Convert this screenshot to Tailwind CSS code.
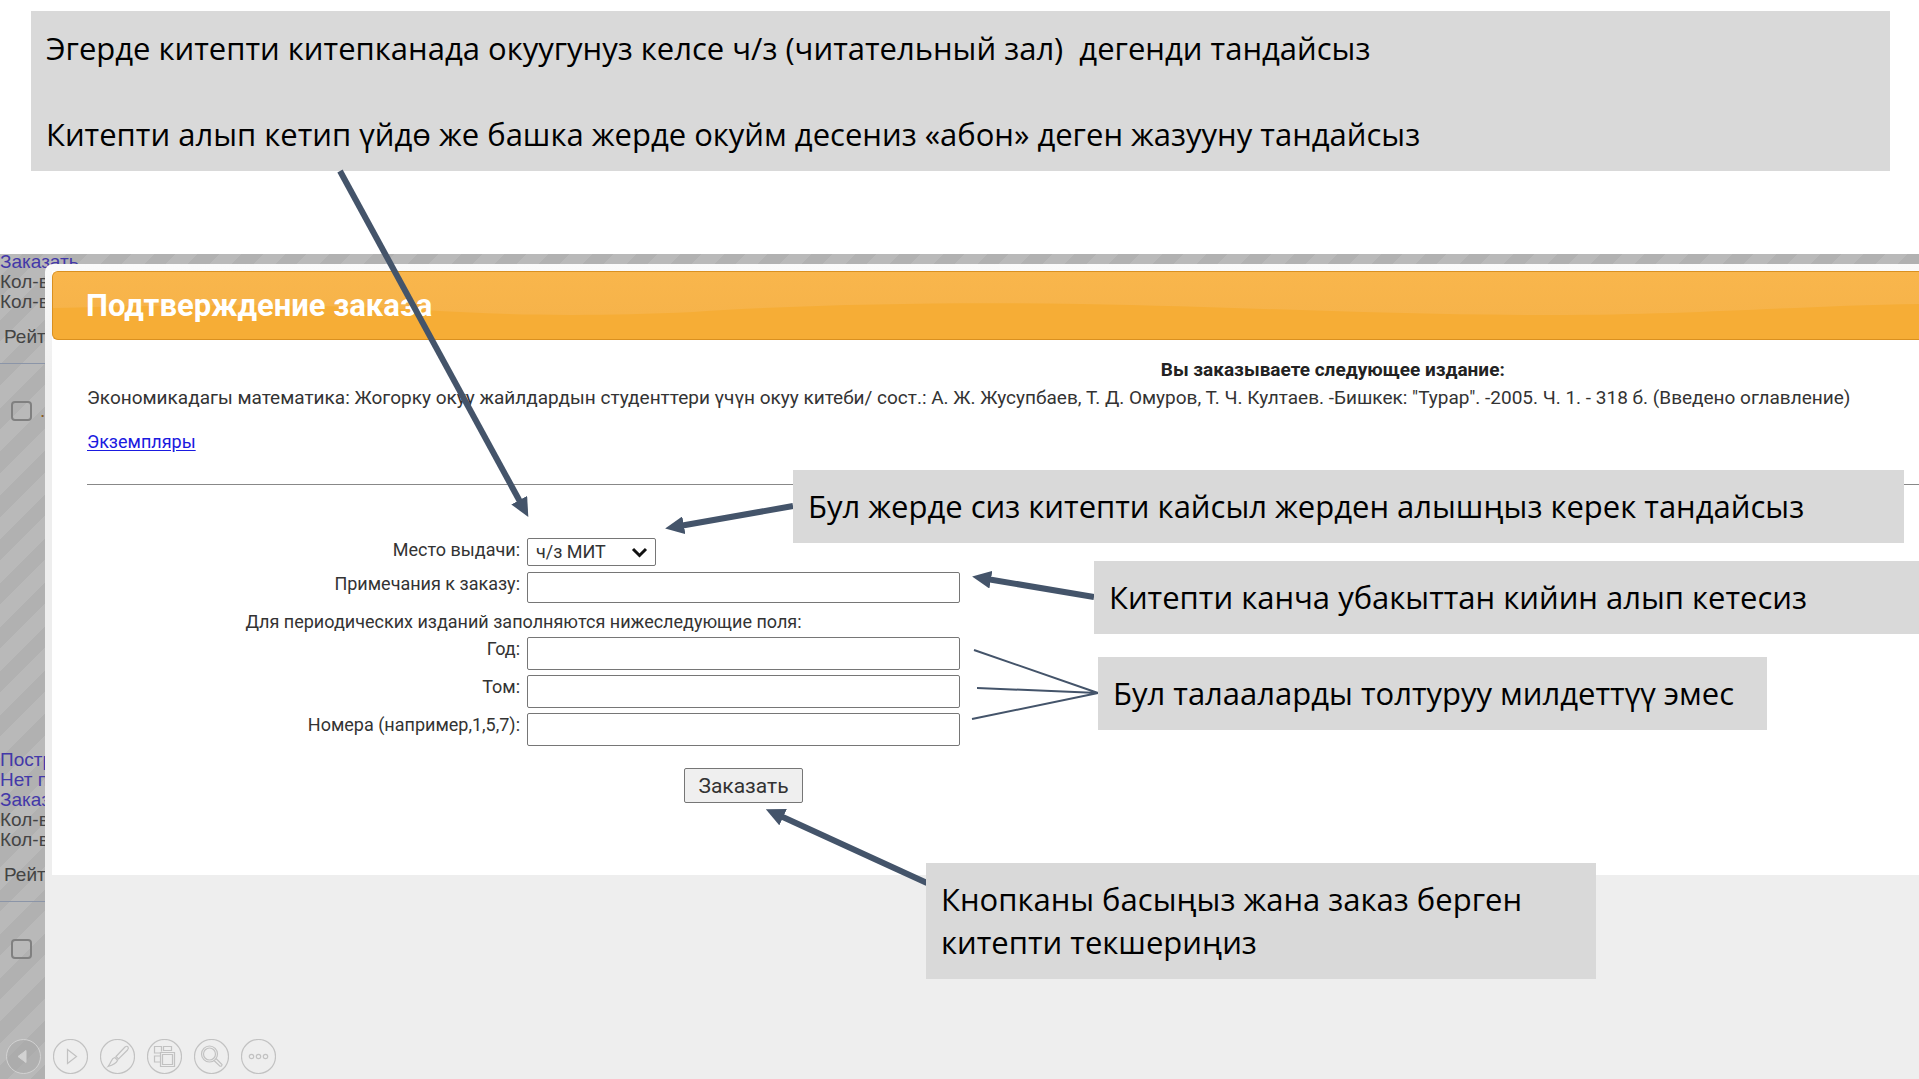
<!DOCTYPE html>
<html lang="ky">
<head>
<meta charset="utf-8">
<title>Подтверждение заказа</title>
<script src="https://cdn.jsdelivr.net/npm/@tailwindcss/browser@4"></script>
</head>
<body class="bg-white text-black">
<main class="relative flex min-h-screen flex-col overflow-hidden">

  <header class="pt-[11px] pr-[29px] pb-[83px] pl-[31px]">
    <div class="bg-[#d9d9d9] px-[15px] pt-4 pb-[15px] font-['Open_Sans','Noto_Sans',sans-serif] text-[31px] leading-[43px]">
      <p class="whitespace-pre">Эгерде китепти китепканада окуугунуз келсе ч/з (читательный зал)  дегенди тандайсыз</p>
      <p class="mt-[43px] whitespace-pre">Китепти алып кетип үйдө же башка жерде окуйм десениз «абон» деген жазууну тандайсыз</p>
    </div>
  </header>

  <div class="grid flex-1 grid-cols-1 overflow-hidden">
    <!-- Catalogue page behind the dialog -->
    <div class="overflow-hidden bg-[repeating-linear-gradient(135deg,#b9b9b9_0px,#b9b9b9_16px,#b1b1b1_16px,#b1b1b1_31px)] font-['Liberation_Sans',sans-serif] text-[19px] leading-5 text-[#444] [grid-area:1/1]">
      <div class="-mt-[2px]">
        <a href="#" class="block text-[#4338a8]">Заказать</a>
        <p>Кол-во</p>
        <p>Кол-во</p>
        <p class="mt-[15px] pl-1">Рейтинг</p>
        <hr class="mt-4 border-[#8b95a8]">
        <div class="mt-[37px] flex items-center gap-2 pl-[11px]">
          <input type="checkbox" aria-label="Выбрать издание 1" class="h-5 w-[21px] appearance-none rounded border-2 border-[#808080]">
          <span class="text-[#8a5a20]">.</span>
        </div>
      </div>
      <div class="mt-[329px]">
        <a href="#" class="block text-[#4338a8]">Постраничный</a>
        <a href="#" class="block text-[#4338a8]">Нет полного</a>
        <a href="#" class="block text-[#4338a8]">Заказать</a>
        <p>Кол-во</p>
        <p>Кол-во</p>
        <p class="mt-[15px] pl-1">Рейтинг</p>
        <hr class="mt-4 border-[#8b95a8]">
        <div class="mt-[37px] flex items-center gap-2 pl-[11px]">
          <input type="checkbox" aria-label="Выбрать издание 2" class="h-5 w-[21px] appearance-none rounded border-2 border-[#808080]">
        </div>
      </div>
    </div>

    <!-- Order confirmation dialog, running off the right edge -->
    <section role="dialog" aria-labelledby="dlg-title" class="z-10 mt-[10px] ml-[45px] overflow-hidden rounded-tl-lg bg-[#eee] bg-[linear-gradient(#fafafa,#eeeeee_120px)] pt-[7px] pl-[7px] font-[Roboto,sans-serif] text-[18px] leading-7 text-[#333] [grid-area:1/1]">
      <div class="bg-white">
        <div class="relative flex h-[69px] items-center overflow-hidden rounded-l-md border border-r-0 border-[#d99020] bg-[#f6ad36] pl-[33px]">
          <svg class="absolute inset-0 h-full w-full" viewBox="0 0 1867 67" preserveAspectRatio="none" aria-hidden="true">
            <defs><linearGradient id="gloss" x1="0" y1="0" x2="0" y2="1"><stop offset="0" stop-color="#f9b64c"/><stop offset="1" stop-color="#f6b34a"/></linearGradient></defs>
            <path d="M0 36C150 32 260 32 370 38C450 43 530 45 640 40C760 32 900 30 1030 32C1200 35 1330 43 1498 43C1640 43 1740 34 1867 32V0H0Z" fill="url(#gloss)"/>
          </svg>
          <h1 id="dlg-title" class="relative text-[31px] font-bold text-white">Подтверждение заказа</h1>
        </div>

        <div class="pt-4 pb-[72px] pl-[35px]">
          <p class="w-[136%] text-center text-[19px] font-bold text-[#222]">Вы заказываете следующее издание:</p>
          <p class="text-[19px] whitespace-nowrap">Экономикадагы математика: Жогорку окуу жайлдардын студенттери үчүн окуу китеби/ сост.: А. Ж. Жусупбаев, Т. Д. Омуров, Т. Ч. Култаев. -Бишкек: "Турар". -2005. Ч. 1. - 318 б. (Введено оглавление)</p>
          <a href="#" class="mt-4 block w-fit text-[#1a1ae0] underline underline-offset-2">Экземпляры</a>
          <hr class="mt-7 border-[#888]">

          <form class="mt-[53px] grid w-fit grid-cols-[433px_433px] items-start gap-x-[7px] gap-y-[5px] leading-6">
            <label for="place" class="text-right">Место выдачи:</label>
            <div class="relative h-[29px] w-[129px]">
              <select id="place" class="h-7 w-full appearance-none rounded-xs border border-[#767676] bg-white pl-2 text-[18px] leading-6">
                <option>ч/з МИТ</option>
              </select>
              <svg class="pointer-events-none absolute top-[9px] right-2 h-3 w-[17px]" viewBox="0 0 17 12" fill="none" stroke="#111" stroke-width="3" aria-hidden="true"><path d="M2 2L8.500 8.500L15 2"/></svg>
            </div>

            <label for="note" class="text-right">Примечания к заказу:</label>
            <input id="note" type="text" class="h-[31px] rounded-xs border border-[#767676] bg-white px-2">

            <p class="col-span-2 pt-1 text-center leading-5">Для периодических изданий заполняются нижеследующие поля:</p>

            <label for="year" class="text-right">Год:</label>
            <input id="year" type="text" class="h-[33px] rounded-xs border border-[#767676] bg-white px-2">

            <label for="volume" class="text-right">Том:</label>
            <input id="volume" type="text" class="h-[33px] rounded-xs border border-[#767676] bg-white px-2">

            <label for="issues" class="text-right">Номера (например,1,5,7):</label>
            <input id="issues" type="text" class="h-[33px] rounded-xs border border-[#767676] bg-white px-2">

            <button type="button" class="col-start-2 mt-[17px] h-[35px] justify-self-center rounded-xs border border-[#767676] bg-[#efefef] px-[13px] text-[21px]">Заказать</button>
          </form>
        </div>
      </div>
    </section>
  </div>

  <!-- Arrows from the notes to the form fields -->
  <svg class="pointer-events-none absolute inset-0 z-20 h-full w-full" fill="none" stroke="#44546a" aria-hidden="true">
    <defs>
      <marker id="head" markerUnits="userSpaceOnUse" markerWidth="19" markerHeight="18" refX="10" refY="9" orient="auto"><path d="M0 0L19 9L0 18Z" fill="#44546a" stroke="none"/></marker>
    </defs>
    <g stroke-width="6">
      <path d="M340 171L524 509" marker-end="url(#head)"/>
      <path d="M793 506L674 527" marker-end="url(#head)"/>
      <path d="M1094 597L981 578" marker-end="url(#head)"/>
      <path d="M927 883L774 813" marker-end="url(#head)"/>
    </g>
    <path stroke-width="2" d="M974 650L1098 693L977 688M1098 693L972 719"/>
  </svg>

  <!-- Notes laid over the screen -->
  <div class="font-['Open_Sans','Noto_Sans',sans-serif] text-[31px] leading-[43px]">
    <p class="absolute top-[470px] right-[15px] left-[793px] z-20 bg-[#d9d9d9] px-[15px] py-[15px] whitespace-nowrap">Бул жерде сиз китепти кайсыл жерден алышңыз керек тандайсыз</p>
    <p class="absolute top-[561px] right-0 left-[1094px] z-20 bg-[#d9d9d9] px-[15px] py-[15px] whitespace-nowrap">Китепти канча убакыттан кийин алып кетесиз</p>
    <p class="absolute top-[657px] left-[1098px] z-20 w-[669px] bg-[#d9d9d9] px-[15px] py-[15px] whitespace-nowrap">Бул талааларды толтуруу милдеттүү эмес</p>
    <p class="absolute top-[863px] left-[926px] z-20 w-[670px] bg-[#d9d9d9] px-[15px] py-[15px]">Кнопканы басыңыз жана заказ берген<br>китепти текшериңиз</p>
  </div>

  <!-- Slide show controls -->
  <nav aria-label="Слайд-шоу" class="absolute bottom-[5px] left-[6px] z-30 flex gap-3 text-[#c2c2c2]">
    <button type="button" aria-label="Назад" class="size-[35px] text-[#d2d2d2]"><svg viewBox="0 0 35 35" fill="none" stroke="currentColor" stroke-width="1"><circle cx="17.500" cy="17.500" r="17" fill="#a8a8a8" fill-opacity=".5"/><path d="M20 11.500V23.500L12 17.500Z" fill="#d2d2d2"/></svg></button>
    <button type="button" aria-label="Вперёд" class="size-[35px]"><svg viewBox="0 0 35 35" fill="none" stroke="currentColor" stroke-width="1.200"><circle cx="17.500" cy="17.500" r="17"/><path d="M14.500 10.500V24.500L23.500 17.500Z"/></svg></button>
    <button type="button" aria-label="Перо" class="size-[35px]"><svg viewBox="0 0 35 35" fill="none" stroke="currentColor" stroke-width="1.200"><circle cx="17.500" cy="17.500" r="17"/><path d="M16 17.500L25 8Q27 6.500 28 8Q29 9 27.500 11L18.500 20ZM14.800 18.500L17.600 21.200Q16 25 8 27.500Q10 25 11 22.500Q12.500 19 14.800 18.500Z"/></svg></button>
    <button type="button" aria-label="Все слайды" class="size-[35px]"><svg viewBox="0 0 35 35" fill="none" stroke="currentColor" stroke-width="1.200"><circle cx="17.500" cy="17.500" r="17"/><path d="M13.500 14H7.500V7.500H14.500V12.500M16.500 11.500V7.500H24.500V11.500ZM13.500 23H7.500V17H13.500M13.500 13.500H27.500V27.500H13.500ZM15.500 15.500H25.500V25.500H15.500Z"/></svg></button>
    <button type="button" aria-label="Увеличить" class="size-[35px]"><svg viewBox="0 0 35 35" fill="none" stroke="currentColor" stroke-width="1.200"><circle cx="17.500" cy="17.500" r="17"/><circle cx="15.500" cy="15" r="8"/><circle cx="15.500" cy="15" r="6"/><path d="M20 21.500L26 27.200Q28 27.500 28 25.500L22 19.500"/></svg></button>
    <button type="button" aria-label="Ещё" class="size-[35px]"><svg viewBox="0 0 35 35" fill="none" stroke="currentColor" stroke-width="1.200"><circle cx="17.500" cy="17.500" r="17"/><circle cx="10.500" cy="17.500" r="2.200"/><circle cx="17.500" cy="17.500" r="2.200"/><circle cx="24.500" cy="17.500" r="2.200"/></svg></button>
  </nav>
</main>
</body>
</html>
